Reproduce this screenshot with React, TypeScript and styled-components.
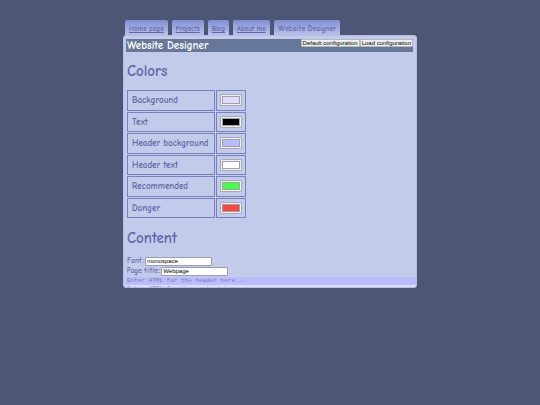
import React, { useState } from "react";
import styled, { createGlobalStyle } from "styled-components";

const ink = "#6468a8";

const GlobalStyle = createGlobalStyle`
  *, *::before, *::after { box-sizing: border-box; }
  html { background: #4d5675; }
  body {
    margin: 0;
    color: ${ink};
    font-family: "Comic Neue", "Comic Sans MS", Lato, sans-serif;
    font-size: 7px;
    line-height: 10px;
  }
`;

const Page = styled.div`
  padding: 20px 123px;
`;

const Tabs = styled.nav`
  display: flex;
  gap: 4px;
  padding: 0 2px;
`;

const Tab = styled.a<{ $current?: boolean }>`
  padding: 4px 4px 1px;
  border-radius: 2px 2px 0 0;
  background: linear-gradient(#7f8fd2, #b9c1ea);
  color: ${ink};
  font-family: ${(p) => (p.$current ? '"Comic Relief"' : '"Comic Neue"')}, "Comic Sans MS", Lato, sans-serif;
  font-weight: ${(p) => (p.$current ? 400 : 700)};
  text-decoration: ${(p) => (p.$current ? "none" : "underline")};
  white-space: nowrap;
`;

const Panel = styled.main`
  max-height: 62.5vh;
  overflow: hidden;
  padding: 3px 2px 0;
  border: 1px solid #b5bfe3;
  border-radius: 3px;
  background: #c3cbea;
`;

const TitleBar = styled.header`
  display: flex;
  justify-content: space-between;
  align-items: flex-start;
  height: 13px;
  margin-right: 1px;
  background: #667799;
`;

const Title = styled.h1`
  margin: 0;
  padding-left: 1px;
  color: #fff;
  font-size: 11px;
  font-weight: 700;
  line-height: 13px;
  white-space: nowrap;
`;

const Actions = styled.div`
  display: flex;
`;

const ActionButton = styled.button`
  height: 8px;
  padding: 0 1px;
  border: 1px solid #b8b8b8;
  border-radius: 1px;
  background: #efefef;
  color: #000;
  font: 6px/6px "Liberation Sans", Arial, sans-serif;
  white-space: nowrap;
`;

const Section = styled.section`
  padding-left: 1px;
`;

const Heading = styled.h2`
  margin: 10px 0 9px;
  font-size: 15px;
  font-weight: 700;
  line-height: 18px;
`;

const ColorTable = styled.table`
  height: 130px;
  margin-left: -1px;
  border-collapse: separate;
  border-spacing: 1px;
`;

const LabelCell = styled.th`
  padding: 0 6px 0 4px;
  border: 1px solid #7880bd;
  font-size: 9px;
  font-weight: 700;
  text-align: left;
  white-space: nowrap;
`;

const SwatchCell = styled.td`
  padding: 0 3px;
  border: 1px solid #7880bd;
`;

const Swatch = styled.input`
  display: block;
  width: 22px;
  height: 12px;
  padding: 1px;
  border: 1px solid #a9a9b2;
  border-radius: 1px;
  background: #efefef;

  &::-webkit-color-swatch-wrapper { padding: 0; }
  &::-webkit-color-swatch { border: 1px solid #a0a0aa; border-radius: 0; }
`;

const Field = styled.div`
  display: flex;
  align-items: center;
  gap: 1px;
  height: 10px;
  font-family: "Comic Relief", "Comic Sans MS", Lato, sans-serif;
`;

const TextInput = styled.input`
  width: 67px;
  height: 9px;
  padding: 0 1px;
  border: 1px solid #9a9fae;
  border-radius: 1px;
  background: #fff;
  color: #000;
  font: 6px/7px "Liberation Sans", Arial, sans-serif;
`;

const Editors = styled.div`
  margin: 1px -2px 0 -1px;
`;

const Editor = styled.textarea<{ $tone: string; $rows: number }>`
  display: block;
  width: 100%;
  height: ${(p) => p.$rows * 8}px;
  padding: 0 1px;
  border: 0;
  background: ${(p) => p.$tone};
  color: #333;
  font: 6px/8px "Liberation Mono", monospace;
  resize: none;
  &::placeholder { color: #7b7b9f; }
`;

const links = ["Home page", "Projects", "Blog", "About me"];

const swatches = [
  ["Background", "#ddddff"],
  ["Text", "#000000"],
  ["Header background", "#bbbbff"],
  ["Header text", "#ffffff"],
  ["Recommended", "#44ff44"],
  ["Danger", "#ff4444"],
];

function ColorRow({ name, initial }: { name: string; initial: string }) {
  const [color, setColor] = useState(initial);
  const id = name.toLowerCase().replace(" ", "-");
  return (
    <tr>
      <LabelCell scope="row">
        <label htmlFor={id}>{name}</label>
      </LabelCell>
      <SwatchCell>
        <Swatch id={id} type="color" value={color} onChange={(e) => setColor(e.target.value)} />
      </SwatchCell>
    </tr>
  );
}

export default function App() {
  return (
    <Page>
      <GlobalStyle />
      <Tabs>
        {links.map((name) => (
          <Tab key={name} href="#">{name}</Tab>
        ))}
        <Tab href="#" $current aria-current="page">Website Designer</Tab>
      </Tabs>
      <Panel>
        <TitleBar>
          <Title>Website Designer</Title>
          <Actions>
            <ActionButton type="button">Default configuration</ActionButton>
            <ActionButton type="button">Load configuration</ActionButton>
          </Actions>
        </TitleBar>
        <Section>
          <Heading>Colors</Heading>
          <ColorTable>
            <tbody>
              {swatches.map(([name, color]) => (
                <ColorRow key={name} name={name} initial={color} />
              ))}
            </tbody>
          </ColorTable>
        </Section>
        <Section>
          <Heading>Content</Heading>
          <Field>
            <label htmlFor="font">Font:</label>
            <TextInput id="font" defaultValue="monospace" />
          </Field>
          <Field>
            <label htmlFor="page-title">Page title:</label>
            <TextInput id="page-title" defaultValue="Webpage" />
          </Field>
          <Editors>
            <Editor $tone="#bbbbff" $rows={1} aria-label="Header HTML" placeholder="Enter HTML for the header here..." />
            <Editor $tone="#ddddff" $rows={4} aria-label="Content HTML" placeholder="Enter HTML for the content here..." />
          </Editors>
        </Section>
      </Panel>
    </Page>
  );
}
